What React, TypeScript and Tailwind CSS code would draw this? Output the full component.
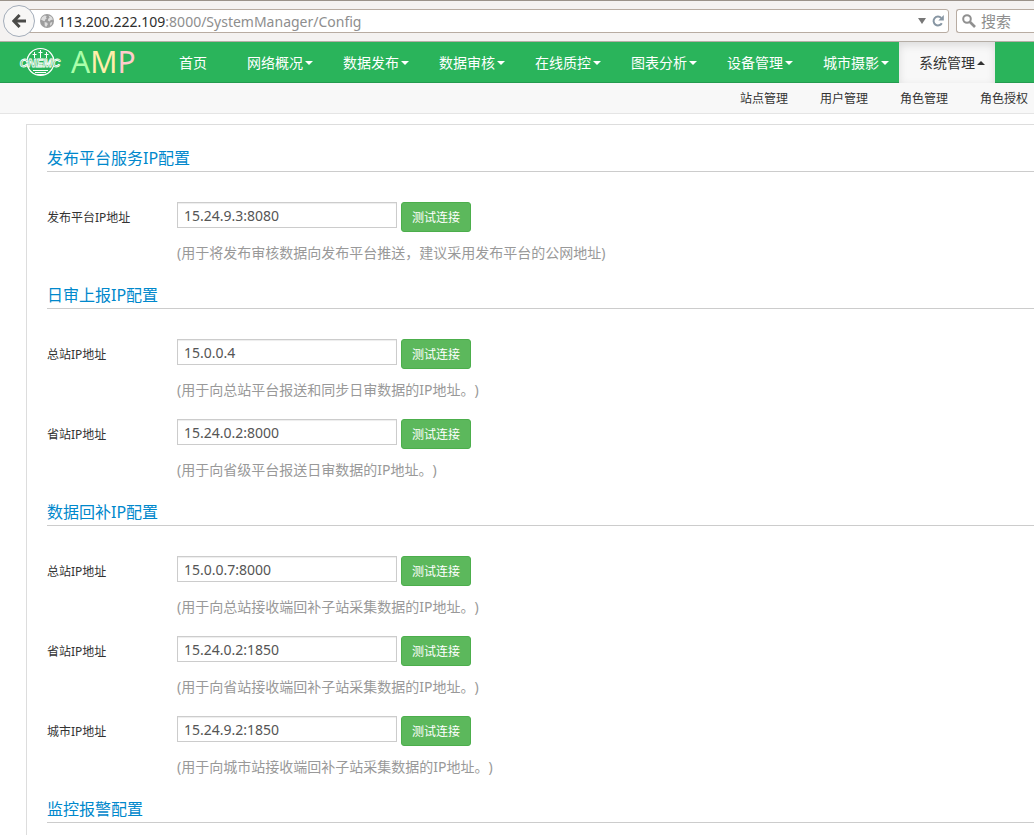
import React from "react";

const menu = ["网络概况", "数据发布", "数据审核", "在线质控", "图表分析", "设备管理", "城市摄影"];
const submenu = ["站点管理", "用户管理", "角色管理", "角色授权"];

type Row = { id: string; label: string; value: string; hint: string };
type Section = { title: string; rows: Row[] };

const sections: Section[] = [
  {
    title: "发布平台服务IP配置",
    rows: [
      {
        id: "publish",
        label: "发布平台IP地址",
        value: "15.24.9.3:8080",
        hint: "(用于将发布审核数据向发布平台推送，建议采用发布平台的公网地址)",
      },
    ],
  },
  {
    title: "日审上报IP配置",
    rows: [
      { id: "report-main", label: "总站IP地址", value: "15.0.0.4", hint: "(用于向总站平台报送和同步日审数据的IP地址。)" },
      { id: "report-province", label: "省站IP地址", value: "15.24.0.2:8000", hint: "(用于向省级平台报送日审数据的IP地址。)" },
    ],
  },
  {
    title: "数据回补IP配置",
    rows: [
      { id: "fill-main", label: "总站IP地址", value: "15.0.0.7:8000", hint: "(用于向总站接收端回补子站采集数据的IP地址。)" },
      { id: "fill-province", label: "省站IP地址", value: "15.24.0.2:1850", hint: "(用于向省站接收端回补子站采集数据的IP地址。)" },
      { id: "fill-city", label: "城市IP地址", value: "15.24.9.2:1850", hint: "(用于向城市站接收端回补子站采集数据的IP地址。)" },
    ],
  },
  { title: "监控报警配置", rows: [] },
];

function BrowserBar() {
  return (
    <div className="flex h-[42px] items-center border-t border-b border-t-[#9a928a] border-b-[#b5aea6] bg-[#f4f2f1] pl-[3px]">
      <button
        aria-label="后退"
        className="relative z-10 flex size-8 shrink-0 items-center justify-center rounded-full border border-[#a3adba] bg-[#f8f7f6]"
      >
        <svg viewBox="0 0 14 14" className="size-[14px]" fill="none" stroke="#4a4a48" strokeWidth="3">
          <path d="M7.6 1 1.8 7l5.8 6M2 7h12" />
        </svg>
      </button>
      <div className="-ml-4 flex h-6 min-w-0 flex-1 items-center rounded-r-[3px] border border-[#b8aca2] bg-white pr-1 pl-5">
        <svg viewBox="0 0 14 14" className="size-[14px] shrink-0">
          <circle cx="7" cy="7" r="7" fill="#9d9d9d" />
          <path
            d="M2 3.2 4.5 1.4l2.2.6-.8 1.4 1 .8-1.6 1.2-.6 1.8-1.6-.4L1 5.600zM8.500 1.500l3 1.300 1.500 2.700-2.200.5-1.300 1.500-1.700-1 .6-1.900 1.200-.8zM4.600 8l2.600.8.600 1.500-1.700 2.700-1.400-1.600zM10.300 8.800l2-.8-.8 2.800-1.500 1z"
            fill="#dedede"
          />
        </svg>
        <div className="ml-1 min-w-0 flex-1 truncate pt-0.5 text-sm text-[#8e8e8e]">
          <span className="text-[#2e2e2e]">113.200.222.109</span>:8000/SystemManager/Config
        </div>
        <svg viewBox="0 0 8 6" className="mr-[6px] h-[6px] w-2 shrink-0">
          <path d="M0 0h8L4 6z" fill="#777" />
        </svg>
        <button aria-label="刷新" className="shrink-0">
          <svg viewBox="0 0 12 12" className="size-3" fill="none" stroke="#8796a3" strokeWidth="2">
            <path d="M9.800 8.200A4.400 4.400 0 1 1 9.200 3" />
            <path d="M11.800 0v5.500H6.300z" fill="#8796a3" stroke="none" />
          </svg>
        </button>
      </div>
      <div className="ml-[7px] flex h-6 w-[78px] shrink-0 items-center rounded-l-[3px] border border-r-0 border-[#b8aca2] bg-white pl-[5px]">
        <svg viewBox="0 0 14 14" className="size-[14px] shrink-0" fill="none" stroke="#909090" strokeWidth="2">
          <circle cx="5" cy="5" r="3.800" />
          <path d="m8 8 5 5" strokeWidth="2.600" />
        </svg>
        <input
          aria-label="搜索"
          placeholder="搜索"
          className="ml-[5px] min-w-0 flex-1 text-[15px] outline-none placeholder:text-[#8e8e8e]"
        />
      </div>
    </div>
  );
}

function Logo() {
  return (
    <svg viewBox="0 0 44 32" className="h-8 w-11 shrink-0" fill="none" stroke="white">
      <circle cx="22.500" cy="16" r="13.500" strokeWidth="1.200" />
      <path d="M16.500 6v6M14.500 8.500h4M22.500 4v8M20.500 6.500h4M28.500 6v6M26.500 8.500h4" strokeWidth="1" />
      <path d="M15 24.500h15M17 26.500h11M19 28.500h7" strokeWidth="1" />
      <text
        x="22"
        y="21"
        textAnchor="middle"
        fontFamily="Liberation Sans"
        fontSize="11"
        fontWeight="700"
        fontStyle="italic"
        fill="#2ab45b"
        strokeWidth="0.800"
      >
        CNEMC
      </text>
    </svg>
  );
}

function Caret({ up = false }: { up?: boolean }) {
  return (
    <svg viewBox="0 0 8 4" className="-mr-[10px] ml-[2px] h-1 w-2 shrink-0" fill="currentColor">
      <path d={up ? "M0 4h8L4 0z" : "M0 0h8L4 4z"} />
    </svg>
  );
}

function NavBar() {
  return (
    <nav className="flex h-[41px] border-b border-[#249b4f] bg-[#2ab45b] pl-[18px] text-sm text-white">
      <a href="#home" className="flex w-[141px] shrink-0 items-center">
        <Logo />
        <span className="ml-[9px] text-[30px] leading-10">
          <span className="text-[#aaffaa]">A</span>
          <span className="text-[#ffeeaa]">M</span>
          <span className="text-[#ffcccc]">P</span>
        </span>
      </a>
      <a href="#index" className="flex shrink-0 items-center px-5 pt-0.5">
        首页
      </a>
      {menu.map((item) => (
        <a key={item} href={"#" + item} className="flex shrink-0 items-center px-5 pt-0.5">
          {item}
          <Caret />
        </a>
      ))}
      <a
        href="#system"
        className="-mb-px flex shrink-0 items-center bg-[#f8f8f8] px-5 text-[#333] shadow-[inset_0_3px_8px_rgba(0,0,0,0.12)]"
      >
        系统管理
        <Caret up />
      </a>
    </nav>
  );
}

function ConfigRow({ row }: { row: Row }) {
  return (
    <div className="flex h-20">
      <label htmlFor={row.id} className="w-[130px] shrink-0 pt-[6px] text-xs leading-5 text-[#333]">
        {row.label}
      </label>
      <div>
        <div className="flex items-start gap-1">
          <input
            id={row.id}
            defaultValue={row.value}
            className="h-[26px] w-[220px] border border-[#ccc] bg-white px-[6px] text-sm text-[#555] shadow-[inset_0_1px_1px_rgba(0,0,0,0.075)] outline-none"
          />
          <button className="h-[30px] w-[70px] rounded-[3px] border border-[#4cae4c] bg-[#5cb85c] pt-0.5 text-xs text-white">
            测试连接
          </button>
        </div>
        <p className="mt-[11px] text-sm leading-5 whitespace-nowrap text-[#999]">{row.hint}</p>
      </div>
    </div>
  );
}

export default function App() {
  return (
    <div className="flex min-h-screen flex-col overflow-hidden bg-white font-['Noto_Sans','Noto_Sans_CJK_SC',sans-serif] [text-spacing-trim:space-all]">
      <BrowserBar />
      <NavBar />
      <div className="flex h-[31px] items-center justify-end gap-8 border-b border-[#e5e5e5] bg-[#f8f8f8] pt-0.5 pr-[6px] text-xs text-[#333]">
        {submenu.map((item) => (
          <a key={item} href={"#" + item}>
            {item}
          </a>
        ))}
      </div>
      <main className="mt-[10px] ml-[26px] flex-1 border-t border-l border-[#ddd] pt-5 pl-5">
        {sections.map((section) => (
          <section key={section.title}>
            <h2 className="h-[27px] border-b border-[#ccc] text-base leading-[26px] text-[#0088cc]">{section.title}</h2>
            {section.rows.length > 0 && (
              <div className="pt-[30px]">
                {section.rows.map((row) => (
                  <ConfigRow key={row.id} row={row} />
                ))}
              </div>
            )}
          </section>
        ))}
      </main>
    </div>
  );
}
